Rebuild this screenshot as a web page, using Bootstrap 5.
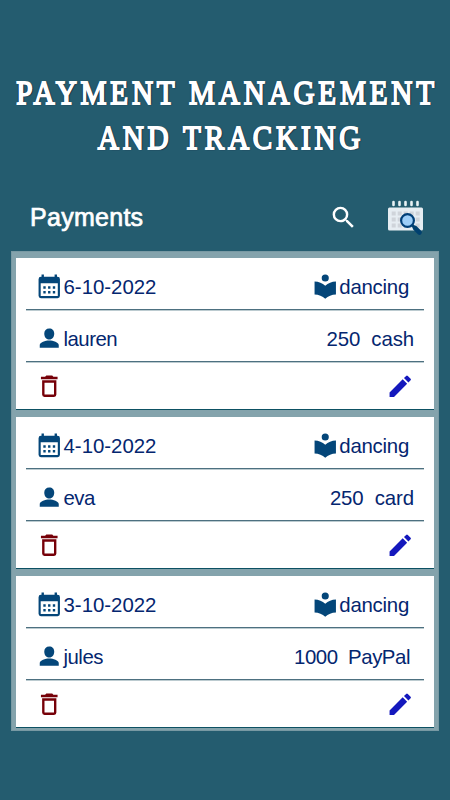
<!DOCTYPE html>
<html lang="en">
<head>
<meta charset="utf-8">
<meta name="viewport" content="width=device-width, initial-scale=1">
<title>Payments</title>
<link href="https://cdn.jsdelivr.net/npm/bootstrap@5.3.0/dist/css/bootstrap.min.css" rel="stylesheet">
<style>
body{background:#245c6f;font-family:"Liberation Sans",Arial,sans-serif;color:#04266f;height:800px;overflow:hidden}
.headline{font-family:"Liberation Serif","Times New Roman",serif;font-size:29.2px;line-height:40px;letter-spacing:3.8px;color:#fff;padding:62px 0 0 4px;height:187px;white-space:nowrap;transform:scaleY(1.125);transform-origin:top;-webkit-text-stroke:1.6px #fff;text-shadow:1px 1px 1px #0b1230,-1px 0 1px #0b1230,1px 0 1px #0b1230}
.second{padding-left:8px}
.topbar{height:64px;padding:0 22px 4px 30px}
.topbar h2{font-size:25px;color:#fff;-webkit-text-stroke:.7px #fff;letter-spacing:.28px}
.find{margin-right:28px}
.panel{background:#84a3ac;margin:0 11px;height:480px;padding:7px 5px 0;gap:7px;box-shadow:inset 0 0 0 1px #7899a3}
.pay{height:152px;border-bottom:1.5px solid #0d5163;padding:0 10px;flex:none}
.line{border-bottom:1px solid #4d7080;box-shadow:0 1px 0 #bccbd0;font-size:20.4px;line-height:24px;height:52px;padding:5px 10px 0 9px;white-space:pre}
.line span{padding-top:1px}
.line .who{letter-spacing:-.5px}
.line .what{letter-spacing:-.25px;margin-right:5px}
.line .total{letter-spacing:-.1px}
.line .paypal{letter-spacing:-.45px;margin-right:4px}
.acts{height:47px;padding:2px 10px 0 9px}
.ic{width:28.500px;height:28.500px;fill:#044679;flex:none}
</style>
<script src="https://cdn.jsdelivr.net/npm/bootstrap@5.3.0/dist/js/bootstrap.bundle.min.js"></script>
</head>
<body>
<svg class="d-none">
<symbol id="cal" viewBox="0 0 24 24"><path fill-rule="evenodd" d="M5.500 2h2v2h9V2h2v2H19a2 2 0 0 1 2 2v14a2 2 0 0 1-2 2H5a2 2 0 0 1-2-2V6a2 2 0 0 1 2-2h.5ZM4.800 9.500V20.200h14.400V9.500ZM7 12h2v2H7Zm4 0h2v2h-2Zm4 0h2v2h-2ZM7 16h2v2H7Zm4 0h2v2h-2Zm4 0h2v2h-2Z"/></symbol>
<symbol id="book" viewBox="0 0 24 24"><path d="M12 11.550C9.640 9.350 6.480 8 3 8v11c3.480 0 6.640 1.350 9 3.550 2.360-2.190 5.520-3.550 9-3.550V8c-3.480 0-6.640 1.350-9 3.550ZM12 8a3 3 0 1 0 0-6 3 3 0 0 0 0 6Z"/></symbol>
<symbol id="man" viewBox="0 0 24 24"><path d="M12 3.800c2.600 0 4.200 1.700 4.200 4.200 0 2.800-1.500 5.100-4.200 5.100S7.800 10.800 7.800 8c0-2.500 1.600-4.200 4.200-4.200ZM4 20v-2.300c0-2.400 4.700-3.900 8-3.900s8 1.500 8 3.900V20Z"/></symbol>
<symbol id="bin" viewBox="0 0 24 24"><path d="M6 19a2 2 0 0 0 2 2h8a2 2 0 0 0 2-2V7H6ZM8 9h8v10H8ZM15.500 4l-1-1h-5l-1 1H5v2h14V4Z"/></symbol>
<symbol id="pen" viewBox="0 0 24 24"><path d="M3 17.250V21h3.750L17.810 9.940l-3.750-3.750ZM20.710 7.040a1 1 0 0 0 0-1.410l-2.340-2.340a1 1 0 0 0-1.410 0l-1.830 1.830 3.750 3.750Z"/></symbol>
</svg>
<h1 class="headline text-center mb-0 fw-normal">PAYMENT MANAGEMENT<br><span class="second">AND TRACKING</span></h1>
<header class="topbar d-flex align-items-center">
<h2 class="mb-0 fw-normal me-auto">Payments</h2>
<svg width="29" height="29" viewBox="0 0 24 24" fill="#fff" class="find"><path d="M15.500 14h-.79l-.28-.27A6.470 6.470 0 0 0 16 9.500 6.500 6.500 0 1 0 9.500 16c1.610 0 3.090-.59 4.230-1.570l.27.28v.79l5 4.990L20.490 19ZM9.500 14a4.500 4.500 0 1 1 0-9 4.500 4.500 0 0 1 0 9Z"/></svg>
<svg width="42" height="40" viewBox="0 0 42 40"><rect x="2" y="10.500" width="35" height="23" rx="1.500" fill="#e6edf2"/><path d="M7.500 5v3M13.500 5v3M19.500 5v3M25.500 5v3M31.500 5v3" stroke="#e8f2f4" stroke-width="2.600" stroke-linecap="round"/><path d="M5.700 16.500H34M5.700 22.500H34M5.700 28.500H34" stroke="#cfd4da" stroke-width="4" stroke-dasharray="4 2"/><path d="m26 28 3 3" stroke="#00406f" stroke-width="3"/><path d="m29 31 4.500 4.500" stroke="#00406f" stroke-width="4.600" stroke-linecap="round"/><circle cx="21.500" cy="23.500" r="6.400" fill="#9dcef8" stroke="#003f78" stroke-width="2.200"/></svg>
</header>
<main class="panel d-flex flex-column">
<article class="pay bg-white">
<div class="line d-flex align-items-center"><svg class="ic"><use href="#cal"/></svg><span>6-10-2022</span><svg class="ic ms-auto"><use href="#book"/></svg><span class="what">dancing</span></div>
<div class="line d-flex align-items-center"><svg class="ic"><use href="#man"/></svg><span class="who">lauren</span><span class="total ms-auto">250  cash</span></div>
<div class="acts d-flex align-items-center justify-content-between"><svg class="ic" style="fill:#760008"><use href="#bin"/></svg><svg class="ic" style="fill:#1418bd"><use href="#pen"/></svg></div>
</article>
<article class="pay bg-white">
<div class="line d-flex align-items-center"><svg class="ic"><use href="#cal"/></svg><span>4-10-2022</span><svg class="ic ms-auto"><use href="#book"/></svg><span class="what">dancing</span></div>
<div class="line d-flex align-items-center"><svg class="ic"><use href="#man"/></svg><span class="who">eva</span><span class="total ms-auto">250  card</span></div>
<div class="acts d-flex align-items-center justify-content-between"><svg class="ic" style="fill:#760008"><use href="#bin"/></svg><svg class="ic" style="fill:#1418bd"><use href="#pen"/></svg></div>
</article>
<article class="pay bg-white">
<div class="line d-flex align-items-center"><svg class="ic"><use href="#cal"/></svg><span>3-10-2022</span><svg class="ic ms-auto"><use href="#book"/></svg><span class="what">dancing</span></div>
<div class="line d-flex align-items-center"><svg class="ic"><use href="#man"/></svg><span class="who">jules</span><span class="paypal ms-auto">1000  PayPal</span></div>
<div class="acts d-flex align-items-center justify-content-between"><svg class="ic" style="fill:#760008"><use href="#bin"/></svg><svg class="ic" style="fill:#1418bd"><use href="#pen"/></svg></div>
</article>
</main>
</body>
</html>
